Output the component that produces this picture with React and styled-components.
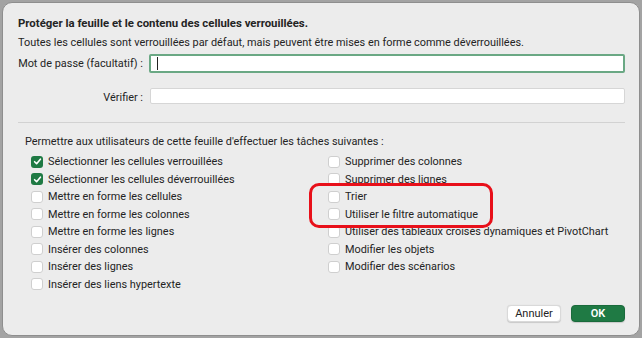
import React from "react";
import styled, { createGlobalStyle } from "styled-components";

const Global = createGlobalStyle`
  html, body { margin: 0; padding: 0; background: #a3a3a3; }
  body { width: 642px; height: 338px; overflow: hidden; font-family: Roboto, "Noto Sans", sans-serif; }
`;

const Dialog = styled.div`
  position: relative;
  box-sizing: border-box;
  margin: 2px;
  width: 638px;
  height: 334px;
  background: #ececec;
  border: 1px solid #8e8e8e;
  border-radius: 10px;
  padding: 11px 14px 0 15px;
  color: #242424;
  font-size: 10.9px;
  display: flex;
  flex-direction: column;
`;

const Title = styled.div`
  font-weight: 700;
  font-size: 11.4px;
  line-height: 19px;
`;

const Text = styled.div`
  line-height: 19px;
  white-space: nowrap;
`;

const FieldGrid = styled.div`
  display: grid;
  grid-template-columns: 125px 1fr;
  column-gap: 6px;
  row-gap: 14px;
  align-items: center;
  margin-top: 2px;
`;

const FieldLabel = styled.div`
  text-align: right;
  line-height: 18px;
  white-space: nowrap;
  transform: translateY(${(p) => p.$shift || 0}px);
`;

const Input = styled.div`
  box-sizing: border-box;
  height: ${(p) => (p.$focused ? 19 : 16)}px;
  background: #fff;
  border: ${(p) => (p.$focused ? "2px solid #6aa884" : "1px solid #d6d6d6")};
  border-radius: 2px;
  margin-left: ${(p) => (p.$focused ? 0 : 1)}px;
  display: flex;
  align-items: center;
  padding-left: 6px;
`;

const Caret = styled.span`
  width: 1px;
  height: 13px;
  background: #222;
`;

const Separator = styled.div`
  height: 1px;
  background: #d2d2d2;
  margin-top: 17px;
`;

const Section = styled.div`
  padding-left: 7px;
  margin-top: 9px;
`;

const Columns = styled.div`
  display: grid;
  grid-template-columns: 297px 1fr;
  margin-top: 2px;
  padding-left: 6px;
`;

const Column = styled.div`
  display: flex;
  flex-direction: column;
`;

const Row = styled.div`
  display: flex;
  align-items: center;
  height: 17.5px;
  gap: 5px;
  white-space: nowrap;
`;

const Box = styled.span`
  box-sizing: border-box;
  width: 12px;
  height: 12px;
  border-radius: 3px;
  flex: none;
  display: flex;
  align-items: center;
  justify-content: center;
  background: ${(p) => (p.$checked ? "#1f7a44" : "#fff")};
  border: ${(p) => (p.$checked ? "none" : "1px solid #cfcfcf")};
`;

const Footer = styled.div`
  margin-top: auto;
  margin-bottom: 13px;
  display: flex;
  justify-content: flex-end;
  gap: 10px;
`;

const Button = styled.button`
  box-sizing: border-box;
  width: 54px;
  height: 17px;
  border-radius: 4px;
  font-family: inherit;
  font-size: 11px;
  padding: 0;
  line-height: 15px;
  border: ${(p) => (p.$primary ? "1px solid #1a6b3c" : "1px solid #d9d9d9")};
  background: ${(p) => (p.$primary ? "#1f7a44" : "#fff")};
  color: ${(p) => (p.$primary ? "#fff" : "#242424")};
  font-weight: ${(p) => (p.$primary ? 600 : 400)};
  box-shadow: 0 0.5px 1px rgba(0,0,0,0.15);
`;

const Highlight = styled.div`
  position: absolute;
  left: 306px;
  top: 180px;
  width: 184px;
  height: 45px;
  box-sizing: border-box;
  border: 3px solid #e8101a;
  border-radius: 10px;
  pointer-events: none;
`;

const Check = () => (
  <svg width="9" height="9" viewBox="0 0 9 9">
    <path d="M1.6 4.7 L3.6 6.7 L7.4 2.2" fill="none" stroke="#fff" strokeWidth="1.6" strokeLinecap="round" strokeLinejoin="round" />
  </svg>
);

const Item = ({ checked, children }) => (
  <Row>
    <Box $checked={checked}>{checked && <Check />}</Box>
    <span>{children}</span>
  </Row>
);

const left = [
  ["Sélectionner les cellules verrouillées", true],
  ["Sélectionner les cellules déverrouillées", true],
  ["Mettre en forme les cellules", false],
  ["Mettre en forme les colonnes", false],
  ["Mettre en forme les lignes", false],
  ["Insérer des colonnes", false],
  ["Insérer des lignes", false],
  ["Insérer des liens hypertexte", false],
];

const right = [
  "Supprimer des colonnes",
  "Supprimer des lignes",
  "Trier",
  "Utiliser le filtre automatique",
  "Utiliser des tableaux croisés dynamiques et PivotChart",
  "Modifier les objets",
  "Modifier des scénarios",
];

export default function App() {
  return (
    <>
      <Global />
      <Dialog>
        <Title>Protéger la feuille et le contenu des cellules verrouillées.</Title>
        <Text>Toutes les cellules sont verrouillées par défaut, mais peuvent être mises en forme comme déverrouillées.</Text>
        <FieldGrid>
          <FieldLabel>Mot de passe (facultatif) :</FieldLabel>
          <Input $focused>
            <Caret />
          </Input>
          <FieldLabel $shift={2}>Vérifier :</FieldLabel>
          <Input />
        </FieldGrid>
        <Separator />
        <Section>
          <Text>Permettre aux utilisateurs de cette feuille d'effectuer les tâches suivantes :</Text>
          <Columns>
            <Column>
              {left.map(([t, c]) => (
                <Item key={t} checked={c}>{t}</Item>
              ))}
            </Column>
            <Column>
              {right.map((t) => (
                <Item key={t}>{t}</Item>
              ))}
            </Column>
          </Columns>
        </Section>
        <Footer>
          <Button>Annuler</Button>
          <Button $primary>OK</Button>
        </Footer>
        <Highlight />
      </Dialog>
    </>
  );
}
